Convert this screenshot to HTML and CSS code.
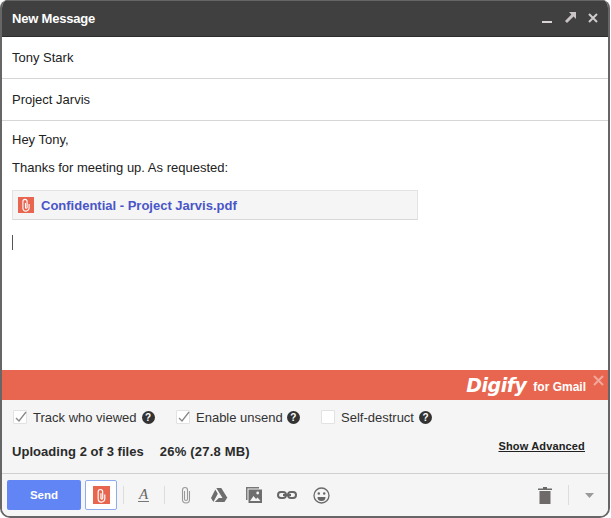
FILE: index.html
```html
<!DOCTYPE html>
<html lang="en">
<head>
<meta charset="utf-8">
<title>New Message</title>
<link rel="stylesheet" href="styles.css">
</head>
<body>
<div class="compose">
  <header class="titlebar">
    <span class="title">New Message</span>
    <div class="winctl">
      <svg width="12" height="12" viewBox="0 0 12 12"><rect x="1" y="9" width="10" height="2" fill="#d8d4d4"/></svg>
      <svg width="13" height="13" viewBox="0 0 13 13"><path d="M5 1h7v7l-2.400-2.400L3 12 1 10l6.400-6.600z" fill="#c9c3c5"/></svg>
      <svg width="10" height="10" viewBox="0 0 10 10"><path d="M1 1l8 8M9 1l-8 8" stroke="#d0cbcd" stroke-width="2"/></svg>
    </div>
  </header>
  <div class="field">Tony Stark</div>
  <div class="field">Project Jarvis</div>
  <main class="body">
    <p class="line first">Hey Tony,</p>
    <p class="line">Thanks for meeting up. As requested:</p>
    <div class="attachment">
      <span class="logo-tile">
        <svg width="10" height="14" viewBox="0 0 10 14"><path d="M4.500 5v4.500a.8.8 0 0 0 1.600 0V3.500a2.100 2.100 0 0 0-4.200 0V10a3.100 3.100 0 0 0 6.200 0V6" fill="none" stroke="#fff" stroke-width="1.100"/></svg>
      </span>
      <a class="attach-name">Confidential - Project Jarvis.pdf</a>
    </div>
    <div class="caret"></div>
  </main>
  <div class="banner">
    <span class="brand">Digify</span><span class="for">for Gmail</span>
    <svg class="banner-x" width="11" height="11" viewBox="0 0 11 11"><path d="M1 1l9 9M10 1l-9 9" stroke="#f3a79a" stroke-width="2"/></svg>
  </div>
  <section class="panel">
    <div class="options">
      <label class="opt opt-track"><span class="box"><svg width="14" height="12" viewBox="0 0 14 12"><path d="M2 7l3 3 7-9" fill="none" stroke="#888" stroke-width="1.300"/></svg></span>Track who viewed<span class="help">?</span></label>
      <label class="opt opt-unsend"><span class="box"><svg width="14" height="12" viewBox="0 0 14 12"><path d="M2 7l3 3 7-9" fill="none" stroke="#888" stroke-width="1.300"/></svg></span>Enable unsend<span class="help">?</span></label>
      <label class="opt"><span class="box"></span>Self-destruct<span class="help">?</span></label>
    </div>
    <div class="status">
      <span class="upload">Uploading 2 of 3 files</span>
      <span class="pct">26% (27.8 MB)</span>
      <a class="advanced">Show Advanced</a>
    </div>
  </section>
  <footer class="toolbar">
    <button class="send">Send</button>
    <span class="digify-btn"><span class="logo-tile small">
      <svg width="11" height="15" viewBox="0 0 10 14"><path d="M4.500 5v4.500a.8.8 0 0 0 1.600 0V3.500a2.100 2.100 0 0 0-4.200 0V10a3.100 3.100 0 0 0 6.200 0V6" fill="none" stroke="#fff" stroke-width="1.100"/></svg>
    </span></span>
    <span class="sep sep-a"></span>
    <span class="font-a">A</span>
    <span class="sep sep-b"></span>
    <svg class="ti ti-clip" width="12" height="18" viewBox="0 0 12 18"><path d="M4.500 5v8a1.500 1.500 0 0 0 3 0V4a2.500 2.500 0 0 0-5 0v9.500a3.500 3.500 0 0 0 7 0V5" fill="none" stroke="#999" stroke-width="1.100"/></svg>
    <svg class="ti ti-drive" width="18" height="16" viewBox="0 0 18 16"><path d="M6.300 1h5l6.200 10h-5zM5.300 2.500l2.500 4.300L3.400 15 1 11zM8.800 11h8.200L14.500 15H4.800z" fill="#6e6e6e"/></svg>
    <svg class="ti ti-photo" width="18" height="18" viewBox="0 0 18 18"><path d="M1 1h13v1.500H2.500V14H1z" fill="#777"/><rect x="3.500" y="3.500" width="13.500" height="13.500" fill="#6e6e6e"/><circle cx="12.700" cy="7" r="1.400" fill="#f5f5f5"/><path d="M5 15l3.500-5 2.500 3 1.500-1.500L15.500 15z" fill="#f5f5f5"/></svg>
    <svg class="ti ti-link" width="20" height="10" viewBox="0 0 20 10"><rect x="1" y="2" width="8" height="6" rx="3" fill="none" stroke="#666" stroke-width="2"/><rect x="11" y="2" width="8" height="6" rx="3" fill="none" stroke="#666" stroke-width="2"/><rect x="6" y="4" width="8" height="2" fill="#666"/></svg>
    <svg class="ti ti-smile" width="17" height="17" viewBox="0 0 17 17"><circle cx="8.500" cy="8.500" r="7.500" fill="none" stroke="#6a6a6a" stroke-width="1.300"/><circle cx="5.800" cy="6.500" r="1.200" fill="#666"/><circle cx="11.200" cy="6.500" r="1.200" fill="#666"/><path d="M4.500 10h8a4 4 0 0 1-8 0z" fill="#666"/></svg>
    <svg class="ti ti-trash" width="14" height="17" viewBox="0 0 14 17"><path d="M5 0h4v1.500h5V3H0V1.500h5z" fill="#6a6a6a"/><rect x="1.500" y="4" width="11" height="13" fill="#6e6a6a"/></svg>
    <span class="sep sep-c"></span>
    <svg class="ti ti-caret" width="9" height="5" viewBox="0 0 9 5"><path d="M0 0h9L4.500 5z" fill="#9a9a9a"/></svg>
  </footer>
</div>
</body>
</html>
```
FILE: styles.css
```css
* { box-sizing: border-box; }
html, body { margin: 0; padding: 0; background: #fff; }
body { width: 611px; height: 518px; overflow: hidden; font-family: "Liberation Sans", Arial, sans-serif; color: #222; }
.compose {
  width: 610px; height: 518px;
  border: 2px solid #666; border-top: 0;
  border-radius: 8px 8px 10px 10px;
  display: flex; flex-direction: column; overflow: hidden;
  background: #fff;
}
.titlebar {
  height: 37px; flex: none;
  background: #404040;
  border-top: 1px solid #666;
  border-bottom: 1px solid #2c2c2c;
  display: flex; align-items: center; justify-content: space-between;
  padding: 0 9px 0 10px;
}
.title { color: #fff; font-size: 13px; font-weight: bold; letter-spacing: -0.2px; margin-top: -1px; }
.winctl { display: flex; align-items: center; gap: 11px; padding-right: 1px; margin-top: -2px; }
.field {
  height: 42px; flex: none; padding: 0 10px;
  border-bottom: 1px solid #d6d6d6;
  display: flex; align-items: center;
  font-size: 13px;
}
.body { height: 249px; flex: none; padding: 11px 10px 0; }
.line { margin: 0 0 12px; font-size: 13px; line-height: 16px; }
.attachment {
  width: 406px; height: 30px; margin-top: 14px;
  background: #f5f5f5; border: 1px solid #e3e3e3; border-bottom-color: #d8d8d8;
  display: flex; align-items: center; padding-left: 5px; gap: 7px;
}
.logo-tile {
  width: 16px; height: 16px; background: #e8664f;
  display: inline-flex; align-items: center; justify-content: center; overflow: hidden; flex: none;
}
.attach-name { color: #4a55c8; font-size: 13px; font-weight: bold; }
.caret { width: 1px; height: 15px; background: #555; margin-top: 15px; }
.banner {
  height: 30px; flex: none; background: #e8664f; color: #fff;
  display: flex; align-items: center; justify-content: flex-end;
  padding-right: 22px; position: relative;
}
.brand { font-size: 19px; font-weight: bold; font-style: italic; font-family: "DejaVu Sans", sans-serif; letter-spacing: -0.5px; line-height: 24px; }
.for { font-size: 12px; font-weight: bold; margin-left: 7px; margin-top: 4px; }
.banner-x { position: absolute; right: 4px; top: 5px; }
.panel { height: 73px; flex: none; background: #f5f5f5; padding: 8px 10px 0; }
.options { display: flex; align-items: center; height: 18px; }
.opt { display: flex; align-items: center; font-size: 13px; color: #333; }
.opt-track { width: 163px; }
.opt-unsend { width: 145px; }
.box {
  width: 14px; height: 14px; background: #fff; border: 1px solid #e2e2e2; border-radius: 1px;
  margin-right: 6px; margin-left: 1px; position: relative; display: inline-block;
}
.box svg { position: absolute; left: 0; top: 0; }
.help {
  width: 13px; height: 13px; border-radius: 50%; background: #333; color: #fff;
  font-size: 10px; font-weight: bold; line-height: 13px; text-align: center; margin-left: 5px;
}
.opt-unsend .help { margin-left: 4px; }
.status { display: flex; align-items: center; margin-top: 17px; height: 16px; }
.upload, .pct { font-size: 13px; font-weight: bold; color: #2a2a2a; letter-spacing: 0.05px; }
.pct { margin-left: 16px; letter-spacing: 0.2px; }
.advanced { margin-left: auto; margin-right: 13px; margin-bottom: 10px; font-size: 11px; font-weight: bold; letter-spacing: 0.15px; text-decoration: underline; color: #222; }
.toolbar {
  flex: 1; min-height: 0; background: #f5f5f5; border-top: 1px solid #cfcfcf;
  display: flex; align-items: center; padding: 0 0 0 5px;
}
.send {
  width: 74px; height: 30px; background: #6285f5; color: #fff; border: 0; border-radius: 2px;
  font: bold 11.500px "Liberation Sans", Arial, sans-serif; padding: 0; flex: none;
}
.digify-btn {
  width: 32px; height: 30px; margin-left: 4px; background: #fff; border: 1px solid #8fabf0; border-radius: 2px;
  display: inline-flex; align-items: center; justify-content: center; flex: none;
}
.logo-tile.small { width: 17px; height: 18px; }
.sep { width: 1px; height: 18px; background: #ddd; flex: none; }
.sep-a { margin-left: 6px; }
.font-a {
  font: italic 15px "Liberation Serif", serif; color: #666; border-bottom: 1.500px solid #777;
  width: 11px; line-height: 13px; margin-left: 14px; text-align: center; flex: none;
}
.sep-b { margin-left: 15px; }
.ti { flex: none; }
.ti-clip { margin-left: 15px; }
.ti-drive { margin-left: 18px; }
.ti-photo { margin-left: 17px; }
.ti-link { margin-left: 14px; }
.ti-smile { margin-left: 16px; }
.ti-trash { margin-left: 208px; }
.sep-c { margin-left: 16px; height: 20px; }
.ti-caret { margin-left: 16px; }
```
